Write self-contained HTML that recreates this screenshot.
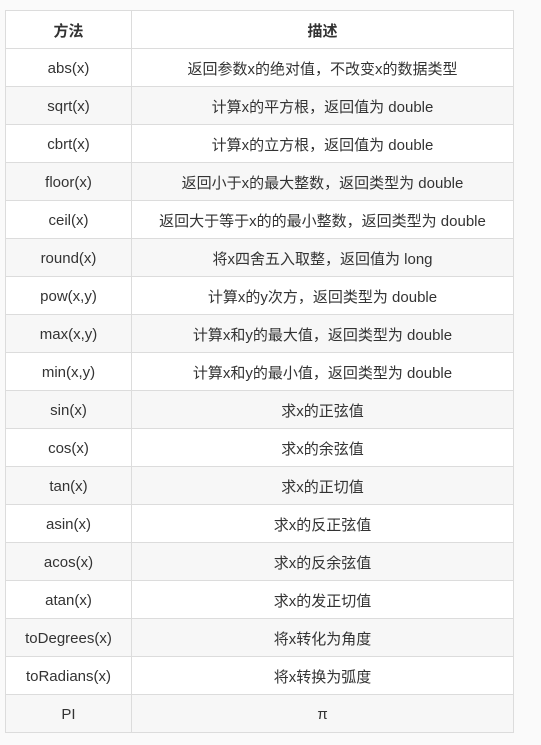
<html><head><style>
body{margin:0;background:#fafafa;}
table{position:absolute;left:5px;top:10px;width:509px;border-collapse:collapse;font-family:"Liberation Sans","Noto Sans CJK SC",sans-serif;font-size:15px;color:#333;}
tr{height:38px;}
td,th{border:1px solid #dcdcdc;padding:2px 0 0 0;text-align:center;background:#fff;}
th{font-weight:bold;}
tr:nth-child(odd) td{background:#f7f7f7;}
td:first-child,th:first-child{width:125px;}
</style></head><body>
<table>
<tr><th>方法</th><th>描述</th></tr>
<tr><td>abs(x)</td><td>返回参数x的绝对值，不改变x的数据类型</td></tr>
<tr><td>sqrt(x)</td><td>计算x的平方根，返回值为 double</td></tr>
<tr><td>cbrt(x)</td><td>计算x的立方根，返回值为 double</td></tr>
<tr><td>floor(x)</td><td>返回小于x的最大整数，返回类型为 double</td></tr>
<tr><td>ceil(x)</td><td>返回大于等于x的的最小整数，返回类型为 double</td></tr>
<tr><td>round(x)</td><td>将x四舍五入取整，返回值为 long</td></tr>
<tr><td>pow(x,y)</td><td>计算x的y次方，返回类型为 double</td></tr>
<tr><td>max(x,y)</td><td>计算x和y的最大值，返回类型为 double</td></tr>
<tr><td>min(x,y)</td><td>计算x和y的最小值，返回类型为 double</td></tr>
<tr><td>sin(x)</td><td>求x的正弦值</td></tr>
<tr><td>cos(x)</td><td>求x的余弦值</td></tr>
<tr><td>tan(x)</td><td>求x的正切值</td></tr>
<tr><td>asin(x)</td><td>求x的反正弦值</td></tr>
<tr><td>acos(x)</td><td>求x的反余弦值</td></tr>
<tr><td>atan(x)</td><td>求x的发正切值</td></tr>
<tr><td>toDegrees(x)</td><td>将x转化为角度</td></tr>
<tr><td>toRadians(x)</td><td>将x转换为弧度</td></tr>
<tr><td>PI</td><td>π</td></tr>
</table>
</body></html>
